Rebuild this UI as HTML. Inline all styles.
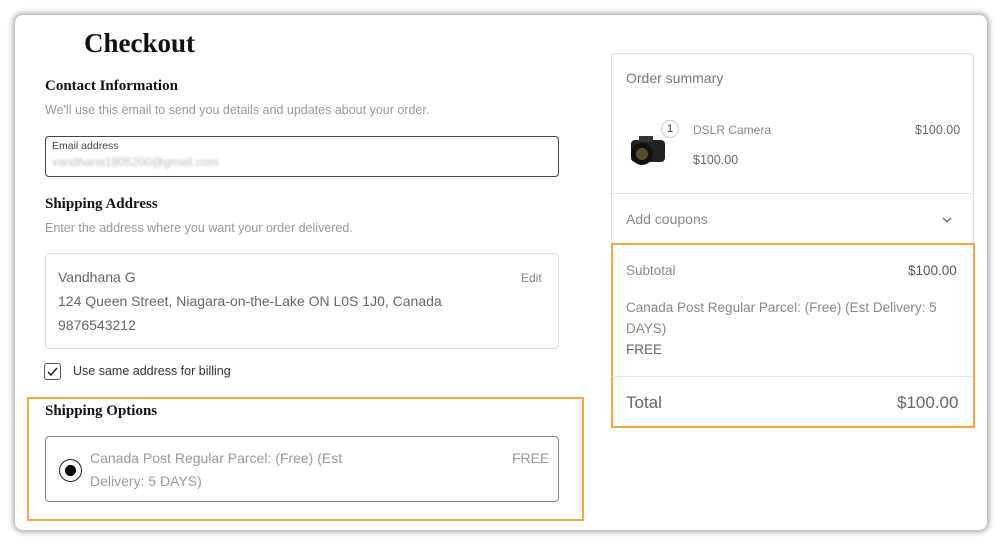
<!DOCTYPE html>
<html><head><meta charset="utf-8"><style>
*{box-sizing:border-box;margin:0;padding:0}
body{width:1000px;height:544px;background:#fff;font-family:"Liberation Sans",sans-serif;position:relative;overflow:hidden}
.card{position:absolute;left:15px;top:15px;width:972px;height:515px;background:#fff;border-radius:8px;box-shadow:0 0 6px 2px rgba(0,0,0,.35)}
.a{position:absolute}
.serif{font-family:"Liberation Serif",serif;color:#111}
.box{position:absolute;border:1px solid #ddd;border-radius:4px}
</style></head><body>
<div class="card"></div>
<div class="a serif" style="left:84px;top:28px;font-size:27px;font-weight:bold">Checkout</div>
<div class="a serif" style="left:45px;top:78px;font-size:15px;font-weight:bold">Contact Information</div>
<div class="a" style="left:45px;top:103px;font-size:12.5px;color:#999">We'll use this email to send you details and updates about your order.</div>
<div class="box" style="left:45px;top:136px;width:514px;height:41px;border:1px solid #444"></div>
<div class="a" style="left:52px;top:140px;font-size:10.5px;color:#444">Email address</div>
<div class="a" style="left:52px;top:155px;font-size:12px;color:#bbb;filter:blur(1.2px)">vandhana1905200@gmail.com</div>
<div class="a serif" style="left:45px;top:196px;font-size:15px;font-weight:bold">Shipping Address</div>
<div class="a" style="left:45px;top:221px;font-size:12.5px;color:#999">Enter the address where you want your order delivered.</div>
<div class="box" style="left:45px;top:253px;width:514px;height:96px"></div>
<div class="a" style="left:58px;top:269px;font-size:14px;color:#666">Vandhana G</div>
<div class="a" style="left:521px;top:271px;font-size:12px;color:#888">Edit</div>
<div class="a" style="left:58px;top:293px;font-size:14px;color:#666">124 Queen Street, Niagara-on-the-Lake ON L0S 1J0, Canada</div>
<div class="a" style="left:58px;top:317px;font-size:14px;color:#666">9876543212</div>
<div class="box" style="left:44px;top:363px;width:17px;height:17px;border:1px solid #555;border-radius:3px"></div>
<svg class="a" style="left:46px;top:365px" width="13" height="13"><path d="M2 7l3 3 6-7" stroke="#222" stroke-width="1.5" fill="none"/></svg>
<div class="a" style="left:73px;top:364px;font-size:12.5px;color:#333">Use same address for billing</div>
<div class="a" style="left:27px;top:397px;width:557px;height:124px;border:2px solid #f5a83a"></div>
<div class="a serif" style="left:45px;top:403px;font-size:15px;font-weight:bold">Shipping Options</div>
<div class="box" style="left:45px;top:436px;width:514px;height:66px;border:1.5px solid #888"></div>
<div class="a" style="left:59px;top:459px;width:23px;height:23px;border:1.5px solid #222;border-radius:50%"></div>
<div class="a" style="left:65px;top:465px;width:11px;height:11px;background:#000;border-radius:50%"></div>
<div class="a" style="left:90px;top:447px;font-size:14px;color:#999;line-height:23px">Canada Post Regular Parcel: (Free) (Est<br>Delivery: 5 DAYS)</div>
<div class="a" style="left:512px;top:450px;font-size:14px;color:#999">FREE</div>
<div class="box" style="left:611px;top:53px;width:363px;height:375px"></div>
<div class="a" style="left:626px;top:70px;font-size:14px;color:#777">Order summary</div>
<svg class="a" style="left:627px;top:132px" width="42" height="38"><rect x="4" y="8" width="34" height="22" rx="4" fill="#222"/><rect x="12" y="4" width="14" height="6" fill="#333"/><circle cx="15" cy="22" r="11" fill="#111"/><circle cx="15" cy="22" r="6" fill="#5a4a30"/></svg>
<div class="a" style="left:661px;top:120px;width:18px;height:18px;border:1px solid #ccc;border-radius:50%;background:#fff;font-size:11px;text-align:center;line-height:16px;color:#333">1</div>
<div class="a" style="left:693px;top:123px;font-size:12px;color:#888">DSLR Camera</div>
<div class="a" style="left:915px;top:123px;font-size:12.5px;color:#666">$100.00</div>
<div class="a" style="left:693px;top:153px;font-size:12.5px;color:#666">$100.00</div>
<div class="a" style="left:611px;top:193px;width:363px;border-top:1px solid #e5e5e5"></div>
<div class="a" style="left:626px;top:211px;font-size:14px;color:#888">Add coupons</div>
<svg class="a" style="left:941px;top:215px" width="12" height="10"><path d="M2 3l4 4 4-4" stroke="#666" stroke-width="1.3" fill="none"/></svg>
<div class="a" style="left:611px;top:243px;width:364px;height:185px;border:2px solid #f5a83a"></div>
<div class="a" style="left:626px;top:263px;font-size:13.5px;color:#888">Subtotal</div>
<div class="a" style="left:908px;top:263px;font-size:13.5px;color:#555">$100.00</div>
<div class="a" style="left:626px;top:297px;width:335px;font-size:13.5px;color:#888;line-height:21px">Canada Post Regular Parcel: (Free) (Est Delivery: 5 DAYS)</div>
<div class="a" style="left:626px;top:342px;font-size:13.5px;color:#666">FREE</div>
<div class="a" style="left:612px;top:376px;width:361px;border-top:1px solid #e5e5e5"></div>
<div class="a" style="left:626px;top:393px;font-size:17px;color:#666">Total</div>
<div class="a" style="left:897px;top:393px;font-size:17px;color:#666">$100.00</div>
</body></html>
